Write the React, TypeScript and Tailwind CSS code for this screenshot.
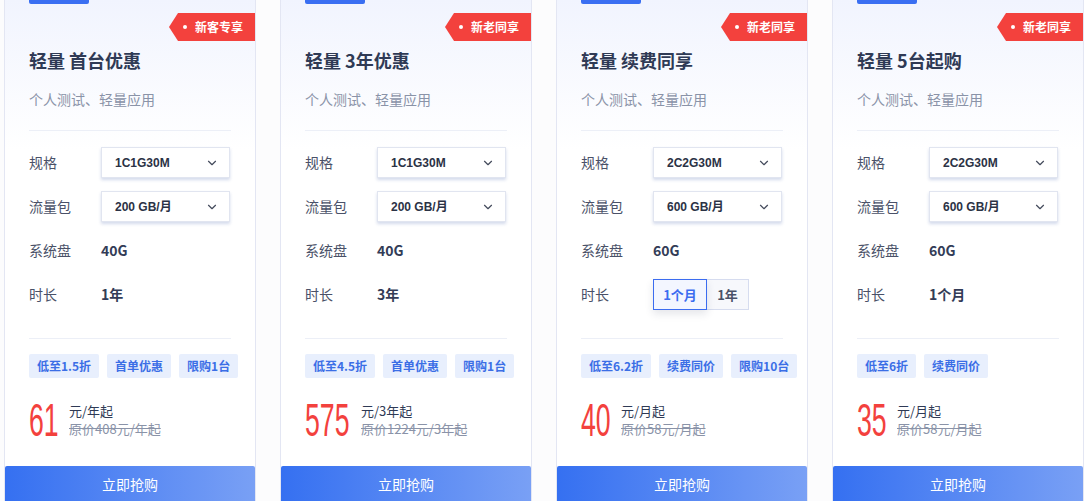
import React from 'react'
import { ChevronDown } from 'lucide-react'

type Plan = {
  title: string
  badge: string
  spec: string
  traffic: string
  disk: string
  duration: string
  toggle?: boolean
  tags: string[]
  price: string
  priceW: string
  unit: string
  origin: string
}

const plans: Plan[] = [
  {
    title: '轻量 首台优惠',
    badge: '新客专享',
    spec: '1C1G30M',
    traffic: '200 GB/月',
    disk: '40G',
    duration: '1年',
    tags: ['低至1.5折', '首单优惠', '限购1台'],
    price: '61',
    priceW: 'w-[31px]',
    unit: '元/年起',
    origin: '原价408元/年起',
  },
  {
    title: '轻量 3年优惠',
    badge: '新老同享',
    spec: '1C1G30M',
    traffic: '200 GB/月',
    disk: '40G',
    duration: '3年',
    tags: ['低至4.5折', '首单优惠', '限购1台'],
    price: '575',
    priceW: 'w-[47px]',
    unit: '元/3年起',
    origin: '原价1224元/3年起',
  },
  {
    title: '轻量 续费同享',
    badge: '新老同享',
    spec: '2C2G30M',
    traffic: '600 GB/月',
    disk: '60G',
    duration: '1个月',
    toggle: true,
    tags: ['低至6.2折', '续费同价', '限购10台'],
    price: '40',
    priceW: 'w-[31px]',
    unit: '元/月起',
    origin: '原价58元/月起',
  },
  {
    title: '轻量 5台起购',
    badge: '新老同享',
    spec: '2C2G30M',
    traffic: '600 GB/月',
    disk: '60G',
    duration: '1个月',
    tags: ['低至6折', '续费同价'],
    price: '35',
    priceW: 'w-[31px]',
    unit: '元/月起',
    origin: '原价58元/月起',
  },
]

const Select: React.FC<{ value: string }> = ({ value }) => (
  <div className="flex items-center justify-between w-[129px] h-[31px] pl-[13px] pr-[10px] bg-white border border-[#e1e5f0] shadow-[0_2px_3px_rgba(60,90,170,0.22)] text-[12px] font-bold text-[#2b3245] font-['Liberation_Sans','Noto_Sans_CJK_SC',sans-serif]">
    <span>{value}</span>
    <ChevronDown className="h-[14px] w-[14px] text-[#444b5c]" strokeWidth={2} />
  </div>
)

const Row: React.FC<{ label: string; className?: string; children: React.ReactNode }> = ({ label, className, children }) => (
  <div className={`flex items-center h-[31px] ${className ?? ''}`}>
    <span className="w-[72px] shrink-0 text-[14px] text-[#4a5168]">{label}</span>
    {children}
  </div>
)

const PlanCard: React.FC<{ plan: Plan }> = ({ plan }) => (
  <div className="relative w-[252px] shrink-0 border border-t-0 border-[#e3e6f3] bg-[linear-gradient(180deg,#f1f4fe_0px,#ffffff_150px)]">
    {/* 角标 */}
    <div className="absolute top-[13px] right-0 flex items-center h-[28px] w-[86px] pl-[14px] bg-[#f3413d] [clip-path:polygon(9px_0,100%_0,100%_100%,9px_100%,0_50%)]">
      <span className="w-[4px] h-[4px] rounded-full bg-white" />
      <span className="ml-[8px] text-[12px] font-bold text-white">{plan.badge}</span>
    </div>

    <div className="ml-6 h-1 w-[60px] rounded-b-[2px] bg-[#3a6ff2]" />

    <div className="px-6">
      <h2 className="mt-[43px] text-[18px] leading-[26px] font-bold text-[#2f3a55]">{plan.title}</h2>
      <p className="mt-4 text-[14px] leading-[20px] text-[#8a93a8]">个人测试、轻量应用</p>
      <div className="mt-[21px] h-px bg-[#eceff7]" />

      <Row label="规格" className="mt-4">
        <Select value={plan.spec} />
      </Row>
      <Row label="流量包" className="mt-[13px]">
        <Select value={plan.traffic} />
      </Row>
      <Row label="系统盘" className="mt-[13px]">
        <span className="text-[14px] font-bold text-[#333c57]">{plan.disk}</span>
      </Row>
      <Row label="时长" className="mt-[13px]">
        {plan.toggle ? (
          <div className="flex h-[31px]">
            <span className="flex items-center justify-center w-[54px] border border-[#3b6cf0] bg-[#f3f6ff] text-[13px] font-bold text-[#3b6cf0] shadow-[0_4px_8px_rgba(40,50,80,0.12)] z-10">
              1个月
            </span>
            <span className="flex items-center justify-center w-[42px] border border-l-0 border-[#d6dcef] bg-[#f7f8fc] text-[13px] font-bold text-[#4a5168]">
              1年
            </span>
          </div>
        ) : (
          <span className="text-[14px] font-bold text-[#333c57]">{plan.duration}</span>
        )}
      </Row>

      <div className="mt-[28px] h-px bg-[#eceff7]" />

      <div className="mt-[15px] flex gap-2 whitespace-nowrap">
        {plan.tags.map(t => (
          <span key={t} className="h-6 px-2 flex items-center rounded-[2px] bg-[#e8effd] text-[12px] font-bold text-[#3b6ee6]">
            {t}
          </span>
        ))}
      </div>

      {/* 价格 */}
      <div className="mt-[19px] flex items-center h-[46px]">
        <div className={`${plan.priceW} shrink-0 h-[46px] overflow-visible`}>
          <span className="inline-block origin-left scale-x-[0.58] text-[46px] leading-[46px] text-[#f3413d] font-['Liberation_Sans',sans-serif]">
            {plan.price}
          </span>
        </div>
        <div className="ml-[9px] flex flex-col text-[13px] leading-[18px]">
          <span className="text-[#2f3a55]">{plan.unit}</span>
          <span className="text-[#8a93a8] line-through">{plan.origin}</span>
        </div>
      </div>
    </div>

    <button className="mt-[23px] w-full h-9 rounded-t-[2px] bg-[linear-gradient(90deg,#3570f1,#79a0f5)] text-[14px] text-white">
      立即抢购
    </button>
  </div>
)

const App: React.FC = () => {
  return (
    <div className="min-h-[501px] bg-[#fcfcfd] pl-1 flex gap-6 font-['Noto_Sans_CJK_SC','Noto_Sans',sans-serif] overflow-hidden">
      {plans.map(p => (
        <PlanCard key={p.title} plan={p} />
      ))}
    </div>
  )
}

export default App
